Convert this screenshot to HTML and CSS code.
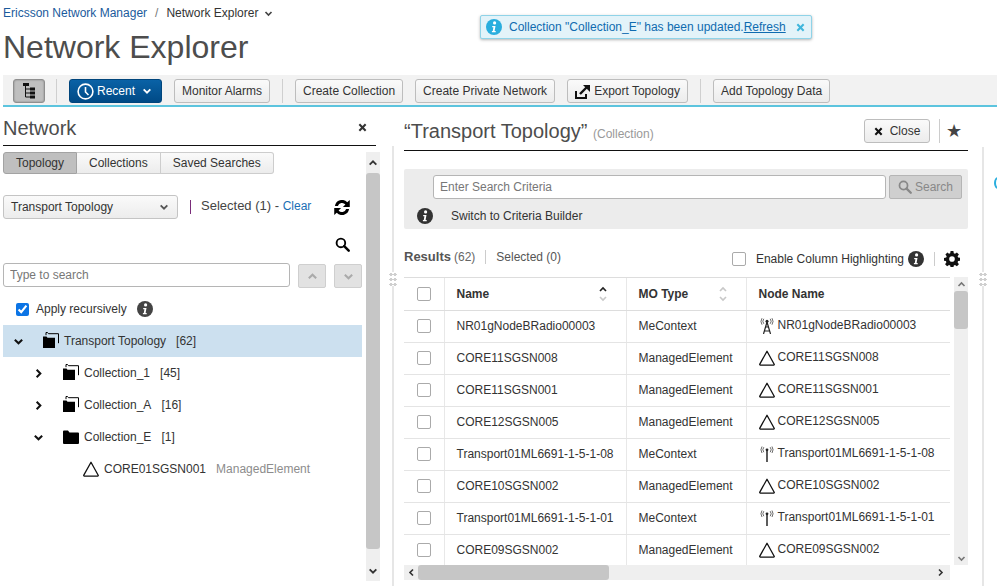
FILE: index.html
```html
<!DOCTYPE html>
<html lang="en">
<head>
<meta charset="utf-8">
<title>Network Explorer</title>
<link rel="stylesheet" href="styles.css">
</head>
<body>
<svg class="defs" width="0" height="0" aria-hidden="true">
  <symbol id="chev" viewBox="0 0 12 12"><path d="M2 4l4 4 4-4" fill="none" stroke="currentColor" stroke-width="2.2"/></symbol>
  <symbol id="cross" viewBox="0 0 10 10"><path d="M1.500 1.500l7 7M8.500 1.500l-7 7" fill="none" stroke="currentColor" stroke-width="2.300"/></symbol>
  <symbol id="folders" viewBox="0 0 16 16"><path d="M0 4.500h3.500l1 1.200H12V16H0z" fill="#000"/><path d="M3 3.200V.5h1.500l1 1.200H15.500v9.500" fill="none" stroke="#000" stroke-width="1"/></symbol>
  <symbol id="folder" viewBox="0 0 16 16"><path d="M0 3.500a1 1 0 0 1 1-1h4l1.500 2H15a1 1 0 0 1 1 1V15a1 1 0 0 1-1 1H1a1 1 0 0 1-1-1z" fill="#000"/></symbol>
  <symbol id="tri" viewBox="0 0 16 16"><path d="M8 1.200L15.200 14.200a.6.6 0 0 1-.5.9H1.300a.6.6 0 0 1-.5-.9z" fill="none" stroke="#111" stroke-width="1.300" stroke-linejoin="round"/></symbol>
  <symbol id="tower" viewBox="0 0 16 16"><path d="M8 4v12" stroke="#333" stroke-width="1.600"/><circle cx="8" cy="3.800" r="1.400" fill="#222"/><path d="M4.800 1.200a4 4 0 0 0 0 5M3 .5a6 6 0 0 0 0 6.500M11.200 1.200a4 4 0 0 1 0 5M13 .5a6 6 0 0 1 0 6.500" fill="none" stroke="#444" stroke-width=".8"/></symbol>
  <symbol id="mast" viewBox="0 0 16 16"><path d="M8 4l-3.500 12M8 4l3.500 12M6.300 9h3.400M5.300 13h5.400" fill="none" stroke="#222" stroke-width="1.200"/><circle cx="8" cy="3.200" r="1.500" fill="#222"/><path d="M4.800 .8a4 4 0 0 0 0 5M3 .2a6 6 0 0 0 0 6.500M11.200 .8a4 4 0 0 1 0 5M13 .2a6 6 0 0 1 0 6.500" fill="none" stroke="#444" stroke-width=".8"/></symbol>
  <symbol id="info" viewBox="0 0 16 16"><circle cx="8" cy="8" r="8" fill="currentColor"/><circle cx="8.600" cy="3.900" r="1.600" fill="#fff"/><path d="M6.200 6.900h3.300l-.9 5.100h1.100v1.300H5.900v-1.300h.9l.6-3.800H6.200z" fill="#fff"/></symbol>
  <symbol id="search" viewBox="0 0 16 16"><circle cx="6.300" cy="6.300" r="4.600" fill="none" stroke="currentColor" stroke-width="2"/><path d="M9.800 9.800l4.800 4.800" stroke="currentColor" stroke-width="2.600" stroke-linecap="round"/></symbol>
</svg>

<div class="toast">
  <svg class="toast-icon"><use href="#info"/></svg>
  <span class="toast-text">Collection "Collection_E" has been updated.<a class="toast-link">Refresh</a></span>
  <svg class="toast-x"><use href="#cross"/></svg>
</div>

<div class="app">
  <header class="head">
    <nav class="crumbs">
      <a class="crumb-link">Ericsson Network Manager</a>
      <span class="crumb-sep">/</span>
      <span class="crumb-cur">Network Explorer</span>
      <svg class="crumb-chev"><use href="#chev"/></svg>
    </nav>
    <h1 class="title">Network Explorer</h1>
  </header>

  <div class="toolbar">
    <button class="btn btn-toggle">
      <svg width="12" height="16" viewBox="0 0 12 16"><path d="M2.500 2v12M2.500 6h6M2.500 10h6M2.500 14h6" stroke="#111" fill="none"/><path d="M0 0h6v3H0zM7 4.500h5v3H7zM7 8.500h5v3H7zM7 12.500h5v3H7z" fill="#111"/></svg>
    </button>
    <span class="tb-div tb-div-a"></span>
    <button class="btn btn-primary">
      <svg width="17" height="17" viewBox="0 0 17 17"><circle cx="8.500" cy="8.500" r="7.400" fill="none" stroke="#fff" stroke-width="1.600"/><path d="M8.500 4v5l3 3" fill="none" stroke="#fff" stroke-width="1.600"/></svg>
      <span>Recent</span>
      <svg class="btn-chev"><use href="#chev"/></svg>
    </button>
    <button class="btn btn-m12">Monitor Alarms</button>
    <span class="tb-div"></span>
    <button class="btn">Create Collection</button>
    <button class="btn btn-m12">Create Private Network</button>
    <button class="btn btn-m12 btn-export">
      <svg width="16" height="15" viewBox="0 0 16 15"><path d="M1 7v7h10v-4" fill="none" stroke="#111" stroke-width="2"/><path d="M5 10l7-7" stroke="#111" stroke-width="2.400"/><path d="M8 1h7v7z" fill="#111"/></svg>
      <span>Export Topology</span>
    </button>
    <span class="tb-div"></span>
    <button class="btn">Add Topology Data</button>
  </div>

  <main class="main">
    <section class="pane-left">
      <div class="left-head">
        <h2 class="left-title">Network</h2>
        <svg class="left-x"><use href="#cross"/></svg>
      </div>
      <div class="left-body">
        <div class="left-content">
          <div class="tabs">
            <span class="tab tab-on">Topology</span>
            <span class="tab">Collections</span>
            <span class="tab">Saved Searches</span>
          </div>
          <div class="sel-row">
            <div class="select"><span>Transport Topology</span><svg class="sel-chev"><use href="#chev"/></svg></div>
            <span class="sel-bar"></span>
            <span class="sel-text">Selected (1) - <a class="link">Clear</a></span>
            <svg class="refresh" width="16" height="15" viewBox="1 1.500 14 13"><path d="M1.800 6.700A6.300 6.300 0 0 1 12.600 3.400L14.800 1.500v6H8.800l2.200-2.100A3.800 3.800 0 0 0 4.400 6.700zM14.200 9.300A6.300 6.300 0 0 1 3.400 12.600L1.200 14.500v-6h6L5 10.600a3.800 3.800 0 0 0 6.600 -1.300z" fill="#000"/></svg>
          </div>
          <div class="find-row"><svg class="find-icon"><use href="#search"/></svg></div>
          <div class="search-row">
            <input class="tree-input" placeholder="Type to search">
            <span class="step"><svg class="rot-up"><use href="#chev"/></svg></span>
            <span class="step"><svg><use href="#chev"/></svg></span>
          </div>
          <label class="apply">
            <input class="apply-box" type="checkbox" checked>
            <span>Apply recursively</span>
            <svg class="apply-info"><use href="#info"/></svg>
          </label>
          <div class="tree">
            <div class="node node-sel l0"><svg class="tw"><use href="#chev"/></svg><svg class="ico"><use href="#folders"/></svg><span>Transport Topology</span><span class="cnt">[62]</span></div>
            <div class="node l1"><svg class="tw rot-right"><use href="#chev"/></svg><svg class="ico"><use href="#folders"/></svg><span>Collection_1</span><span class="cnt">[45]</span></div>
            <div class="node l1"><svg class="tw rot-right"><use href="#chev"/></svg><svg class="ico"><use href="#folders"/></svg><span>Collection_A</span><span class="cnt">[16]</span></div>
            <div class="node l1"><svg class="tw"><use href="#chev"/></svg><svg class="ico"><use href="#folder"/></svg><span>Collection_E</span><span class="cnt">[1]</span></div>
            <div class="node l2"><svg class="ico-tri"><use href="#tri"/></svg><span>CORE01SGSN001</span><span class="cnt grey">ManagedElement</span></div>
          </div>
        </div>
        <div class="vbar vbar-left">
          <span class="sb-btn"><svg class="rot-up"><use href="#chev"/></svg></span>
          <span class="vthumb vthumb-left"></span>
          <span class="sb-fill"></span>
          <span class="sb-btn"><svg><use href="#chev"/></svg></span>
        </div>
      </div>
    </section>

    <div class="split split-a"><span class="dots"></span></div>

    <section class="pane-right">
      <div class="right-head">
        <h2 class="right-title">“Transport Topology” <small class="right-sub">(Collection)</small></h2>
        <button class="btn btn-close"><svg class="close-x"><use href="#cross"/></svg><span>Close</span></button>
        <span class="head-div"></span>
        <span class="star">★</span>
      </div>
      <div class="criteria">
        <div class="crit-row">
          <input class="crit-input" placeholder="Enter Search Criteria">
          <span class="crit-btn"><svg class="crit-ico"><use href="#search"/></svg>Search</span>
        </div>
        <div class="crit-row2">
          <svg class="crit-info"><use href="#info"/></svg>
          <span>Switch to Criteria Builder</span>
        </div>
      </div>
      <div class="results">
        <span class="res-main">Results</span><span class="res-n">(62)</span>
        <span class="res-bar"></span>
        <span class="res-sel">Selected (0)</span>
        <span class="res-opt"><span class="cb"></span><span>Enable Column Highlighting</span><svg class="res-info"><use href="#info"/></svg></span>
        <span class="res-bar res-bar2"></span>
        <svg class="gear" width="16" height="16" viewBox="0 0 16 16"><path fill="#111" fill-rule="evenodd" d="M6.600 0h2.800l.4 2.200 1.200.5L12.900 1.400l2 2-1.300 1.900.5 1.200 2.200.4v2.800l-2.200.4-.5 1.200 1.300 1.900-2 2-1.900-1.300-1.200.5-.4 2.200H6.600l-.4-2.200-1.200-.5-1.900 1.300-2-2 1.300-1.900-.5-1.200L0 9.700V6.900l2.200-.4.5-1.200L1.400 3.400l2-2L5 2.700l1.200-.5zM8 5.200a2.800 2.800 0 1 0 0 5.600 2.800 2.800 0 0 0 0-5.600z"/></svg>
      </div>
      <div class="grid-wrap">
        <div class="grid-col">
          <div class="grid-clip">
            <table class="grid">
              <colgroup><col class="c1"><col class="c2"><col class="c3"><col class="c4"></colgroup>
              <thead>
                <tr>
                  <th><span class="cb"></span></th>
                  <th><div class="th-in"><span>Name</span><span class="sort sort-asc"><svg class="rot-up"><use href="#chev"/></svg><svg><use href="#chev"/></svg></span></div></th>
                  <th><div class="th-in"><span>MO Type</span><span class="sort"><svg class="rot-up"><use href="#chev"/></svg><svg><use href="#chev"/></svg></span></div></th>
                  <th>Node Name</th>
                </tr>
              </thead>
              <tbody>
                <tr><td><span class="cb"></span></td><td>NR01gNodeBRadio00003</td><td>MeContext</td><td><div class="nd"><svg class="nd-ico"><use href="#mast"/></svg><span>NR01gNodeBRadio00003</span></div></td></tr>
                <tr><td><span class="cb"></span></td><td>CORE11SGSN008</td><td>ManagedElement</td><td><div class="nd"><svg class="nd-ico"><use href="#tri"/></svg><span>CORE11SGSN008</span></div></td></tr>
                <tr><td><span class="cb"></span></td><td>CORE11SGSN001</td><td>ManagedElement</td><td><div class="nd"><svg class="nd-ico"><use href="#tri"/></svg><span>CORE11SGSN001</span></div></td></tr>
                <tr><td><span class="cb"></span></td><td>CORE12SGSN005</td><td>ManagedElement</td><td><div class="nd"><svg class="nd-ico"><use href="#tri"/></svg><span>CORE12SGSN005</span></div></td></tr>
                <tr><td><span class="cb"></span></td><td>Transport01ML6691-1-5-1-08</td><td>MeContext</td><td><div class="nd"><svg class="nd-ico"><use href="#tower"/></svg><span>Transport01ML6691-1-5-1-08</span></div></td></tr>
                <tr><td><span class="cb"></span></td><td>CORE10SGSN002</td><td>ManagedElement</td><td><div class="nd"><svg class="nd-ico"><use href="#tri"/></svg><span>CORE10SGSN002</span></div></td></tr>
                <tr><td><span class="cb"></span></td><td>Transport01ML6691-1-5-1-01</td><td>MeContext</td><td><div class="nd"><svg class="nd-ico"><use href="#tower"/></svg><span>Transport01ML6691-1-5-1-01</span></div></td></tr>
                <tr><td><span class="cb"></span></td><td>CORE09SGSN002</td><td>ManagedElement</td><td><div class="nd"><svg class="nd-ico"><use href="#tri"/></svg><span>CORE09SGSN002</span></div></td></tr>
              </tbody>
            </table>
          </div>
          <div class="hbar">
            <svg class="rot-left"><use href="#chev"/></svg>
            <span class="hthumb"></span>
            <span class="sb-fill"></span>
            <svg class="rot-right"><use href="#chev"/></svg>
          </div>
        </div>
        <div class="vbar vbar-right">
          <span class="sb-btn-s"><svg class="rot-up"><use href="#chev"/></svg></span>
          <span class="vthumb vthumb-right"></span>
          <span class="sb-fill"></span>
          <span class="sb-btn-s"><svg><use href="#chev"/></svg></span>
        </div>
      </div>
    </section>

    <div class="split split-b"><span class="dots"></span><span class="peek"></span></div>
  </main>
</div>
</body>
</html>
```

FILE: styles.css
```css
* { box-sizing: border-box; }
html, body { margin: 0; padding: 0; }
body {
  width: 997px; height: 586px; overflow: hidden; background: #fff; position: relative;
  font: 12px/14px "Liberation Sans", Arial, sans-serif; color: #333;
}
.defs { position: absolute; }
.app { display: flex; flex-direction: column; width: 997px; height: 586px; }

/* header */
.head { height: 75px; padding: 6px 0 0 3px; flex: none; }
.crumbs { display: flex; align-items: center; height: 14px; }
.crumb-link { color: #1a5a9c; }
.crumb-sep { margin: 0 8px; color: #777; }
.crumb-cur { color: #333; }
.crumb-chev { width: 9px; height: 9px; margin-left: 6px; color: #444; }
.title { margin: 7px 0 0; font-weight: 400; font-size: 32px; line-height: 40px; color: #4d4d4d; }

/* toast */
.toast {
  position: absolute; left: 480px; top: 15px; width: 332px; height: 24px;
  display: flex; align-items: center; padding: 0 6px 0 5px;
  background: #e3f3f9; border: 1px solid #8fd3e8; border-radius: 2px; box-shadow: 0 1px 3px rgba(0,0,0,.3);
  color: #0f6bb0;
}
.toast-icon { width: 16px; height: 16px; color: #2aaede; flex: none; }
.toast-text { margin-left: 7px; flex: 1; white-space: nowrap; }
.toast-link { text-decoration: underline; }
.toast-x { color: #3fb6dc; width: 9px; height: 9px; flex: none; }

/* toolbar */
.toolbar {
  margin-left: 3px; height: 32px; flex: none; padding: 4px 0 0 10px; display: flex; align-items: flex-start;
  background: #f2f2f2; border-bottom: 2px solid #5cc4de;
}
.btn {
  height: 24px; padding: 0 7px; display: inline-flex; align-items: center; gap: 3px; flex: none;
  font: 12px/14px "Liberation Sans", Arial, sans-serif; color: #333;
  background: linear-gradient(#fafafa, #ececec); border: 1px solid #bdbdbd; border-radius: 3px;
}
.btn-toggle { width: 32px; justify-content: center; padding: 0; background: #bfbfbf; border-color: #8f8f8f; box-shadow: inset 0 0 2px rgba(0,0,0,.35); }
.btn-primary { width: 93px; background: linear-gradient(#0a62a6, #004a86); border-color: #00457c; color: #fff; padding: 0 7px; }
.btn-chev { width: 10px; height: 10px; margin-left: 4px; color: #fff; }
.btn-m12 { margin-left: 12px; }
.btn-export { gap: 3px; }
.tb-div { width: 1px; height: 24px; background: #cfcfcf; margin: 0 12px; flex: none; }
.tb-div-a { margin: 0 12px 0 11px; }

/* main */
.main { flex: 1; display: flex; min-height: 0; }

/* left */
.pane-left { width: 378px; margin-left: 3px; flex: none; display: flex; flex-direction: column; }
.left-head {
  width: 373px; height: 39px; flex: none; display: flex; justify-content: space-between; align-items: center;
  padding: 3px 9px 0 0; border-bottom: 1px solid #111;
}
.left-title { margin: 0; font-weight: 400; font-size: 20px; line-height: 24px; color: #4d4d4d; }
.left-x { width: 9px; height: 9px; color: #333; flex: none; }
.left-body { flex: 1; display: flex; padding: 6px 0 5px; min-height: 0; }
.left-content { width: 359px; flex: none; }
.tabs { display: flex; height: 22px; }
.tab {
  display: flex; align-items: center; padding: 0 12px; height: 22px; color: #333;
  background: linear-gradient(#fafafa, #ececec); border: 1px solid #cdcdcd; border-left: 0;
}
.tab:last-child { border-radius: 0 3px 3px 0; }
.tab-on { background: #bfbfbf; border: 1px solid #a3a3a3; border-radius: 3px 0 0 3px; width: 74px; justify-content: center; padding: 0; }
.sel-row { display: flex; align-items: center; height: 24px; margin-top: 21px; }
.select {
  width: 175px; height: 24px; padding: 0 8px 0 7px; display: flex; justify-content: space-between; align-items: center; flex: none;
  background: linear-gradient(#fafafa, #ececec); border: 1px solid #c4c4c4; border-radius: 3px; color: #333;
}
.sel-chev { width: 10px; height: 10px; color: #555; }
.sel-bar { width: 1px; height: 14px; background: #7a2d7a; margin-left: 12px; flex: none; }
.sel-text { margin: -3px 0 0 10px; font-size: 13px; color: #444; width: 130px; white-space: nowrap; }
.link { color: #1a6fb5; font-size: 12px; }
.refresh { flex: none; margin-left: 3px; }
.find-row { display: flex; justify-content: flex-end; height: 44px; padding: 18px 12px 0 0; }
.find-icon { width: 15px; height: 15px; color: #000; }
.search-row { display: flex; align-items: flex-start; }
.tree-input {
  width: 287px; height: 24px; padding: 0 6px; flex: none; border: 1px solid #b5b5b5; border-radius: 3px; outline: 0;
  font: 12px "Liberation Sans", Arial, sans-serif; color: #333;
}
.tree-input::placeholder, .crit-input::placeholder { color: #777; opacity: 1; }
.step {
  width: 28px; height: 24px; margin: 1px 0 0 8px; display: flex; align-items: center; justify-content: center; color: #aaa;
  background: #e2e2e2; border: 1px solid #cfcfcf; border-radius: 2px;
}
.step svg { width: 11px; height: 11px; }
.rot-up { transform: rotate(180deg); }
.rot-right { transform: rotate(-90deg); }
.rot-left { transform: rotate(90deg); }
.apply { display: flex; align-items: center; height: 22px; margin-top: 10px; padding-left: 13px; color: #333; }
.apply-box { width: 13px; height: 13px; margin: 0 7px 0 0; accent-color: #0b74e5; }
.apply-info { width: 16px; height: 16px; margin-left: 10px; color: #444; }
.tree { margin-top: 5px; }
.node { height: 32px; display: flex; align-items: center; color: #333; }
.node-sel { background: #cce0ef; }
.tw { width: 11px; height: 11px; color: #111; flex: none; }
.ico { width: 16px; height: 16px; flex: none; }
.l0 { padding-left: 10px; }
.l0 .ico { margin: -2px 5px 0 19px; }
.l1 { padding-left: 30px; }
.l1 .ico { margin: -2px 5px 0 19px; }
.l2 { padding-left: 80px; }
.ico-tri { width: 16px; height: 16px; margin-right: 5px; flex: none; }
.cnt { margin-left: 10px; }
.grey { color: #8c8c8c; }

/* scrollbars */
.vbar { display: flex; flex-direction: column; flex: none; background: #efefef; }
.vbar-left { width: 14px; margin-left: 4px; }
.vbar-right { width: 14px; margin-left: 4px; height: 288px; }
.sb-btn { height: 21px; display: flex; align-items: center; justify-content: center; color: #333; flex: none; }
.sb-btn svg { width: 10px; height: 10px; }
.sb-btn-s { height: 14px; display: flex; align-items: center; justify-content: center; color: #777; flex: none; }
.sb-btn-s svg { width: 9px; height: 9px; }
.vthumb { background: #c6c6c6; border-radius: 3px; flex: none; width: 14px; }
.vthumb-left { height: 376px; }
.vthumb-right { height: 38px; }
.sb-fill { flex: 1; }

/* splitters */
.split { flex: none; position: relative; display: flex; justify-content: center; }
.split-a { width: 23px; margin-top: 39px; padding-top: 126px; background: linear-gradient(#e6e6e6, #e6e6e6) center top / 2px 100% no-repeat; }
.split-b { width: 29px; margin-top: 40px; padding-top: 125px; background: linear-gradient(#e6e6e6, #e6e6e6) center top / 2px 100% no-repeat; }
.dots {
  display: block; width: 8px; height: 14px; background-color: #fff;
  background-image: radial-gradient(circle, #cfcfcf 1.5px, transparent 1.6px);
  background-size: 4px 5px;
}
.peek { position: absolute; right: -5px; top: 30px; width: 8px; height: 12px; border: 2px solid #2aaede; border-radius: 50%; }

/* right */
.pane-right { width: 564px; flex: none; display: flex; flex-direction: column; }
.right-head { height: 44px; flex: none; display: flex; align-items: flex-end; padding: 0 7px 7px 0; border-bottom: 1px solid #111; }
.right-title { margin: 0 auto -3px 0; font-weight: 400; font-size: 20px; line-height: 24px; color: #4d4d4d; }
.right-sub { font-size: 12px; color: #999; }
.btn-close { width: 66px; justify-content: center; gap: 7px; }
.close-x { width: 9px; height: 9px; color: #111; flex: none; }
.head-div { width: 1px; height: 24px; background: #ccc; margin-left: 9px; }
.star { margin: 0 0 3px 6px; width: 15px; font-size: 18px; line-height: 18px; color: #444; }
.criteria { margin-top: 18px; height: 60px; flex: none; background: #ececec; border-radius: 2px; padding: 6px 6px 0 0; }
.crit-row { display: flex; padding-left: 29px; }
.crit-input {
  width: 453px; height: 24px; padding: 0 6px; border: 1px solid #b5b5b5; border-radius: 3px; outline: 0; flex: none;
  font: 12px "Liberation Sans", Arial, sans-serif;
}
.crit-btn {
  width: 73px; height: 24px; margin-left: 3px; display: flex; align-items: center; justify-content: center; gap: 3px;
  background: #cfcfcf; border: 1px solid #b5b5b5; border-radius: 2px; color: #888;
}
.crit-ico { width: 14px; height: 14px; color: #888; }
.crit-row2 { display: flex; align-items: center; height: 16px; margin-top: 9px; padding-left: 13px; color: #333; }
.crit-info { width: 16px; height: 16px; color: #333; margin-right: 18px; }
.results { display: flex; align-items: center; height: 48px; flex: none; padding: 7px 8px 0 0; }
.res-main { font-weight: 700; font-size: 13px; color: #555; }
.res-n { margin-left: 3px; color: #666; }
.res-bar { width: 1px; height: 14px; background: #ccc; margin: 0 10px; }
.res-sel { color: #555; }
.res-opt { margin-left: auto; display: flex; align-items: center; padding-top: 4px; }
.res-opt .cb { margin-right: 10px; }
.res-info { width: 16px; height: 16px; margin-left: 4px; color: #333; }
.res-bar2 { margin: 4px 9px 0 10px; height: 14px; }
.gear { margin-top: 4px; flex: none; }
.cb { display: block; width: 14px; height: 14px; background: #fff; border: 1px solid #aaa; border-radius: 2px; flex: none; }

/* grid */
.grid-wrap { display: flex; height: 303px; flex: none; }
.grid-col { width: 546px; flex: none; display: flex; flex-direction: column; }
.grid-clip { height: 288px; overflow: hidden; flex: none; border-top: 1px solid #ddd; }
.grid { width: 546px; table-layout: fixed; border-collapse: collapse; }
.c1 { width: 40px; } .c2 { width: 182px; } .c3 { width: 120px; } .c4 { width: 204px; }
.grid th, .grid td { height: 32px; padding: 0 12px; text-align: left; border-bottom: 1px solid #e4e4e4; border-left: 1px solid #e8e8e8; white-space: nowrap; color: #333; font-weight: 400; }
.grid th { font-weight: 700; border-bottom: 1px solid #ddd; }
.grid th:first-child, .grid td:first-child { padding: 0 0 0 13px; border-left: 0; }
.th-in { display: flex; justify-content: space-between; align-items: center; }
.sort { display: flex; flex-direction: column; color: #c8c8c8; margin-right: 5px; }
.sort svg { width: 12px; height: 9px; display: block; }
.sort-asc .rot-up { color: #222; }
.nd { display: flex; align-items: center; gap: 3px; }
.nd span { margin-top: -2px; }
.nd-ico { width: 16px; height: 16px; flex: none; margin-top: 0; }
.hbar { height: 15px; display: flex; align-items: center; background: #efefef; flex: none; padding: 0 5px 0 3px; color: #333; }
.hbar svg { width: 9px; height: 9px; flex: none; }
.hthumb { width: 191px; height: 15px; margin-left: 2px; background: #c6c6c6; border-radius: 3px; }
```
